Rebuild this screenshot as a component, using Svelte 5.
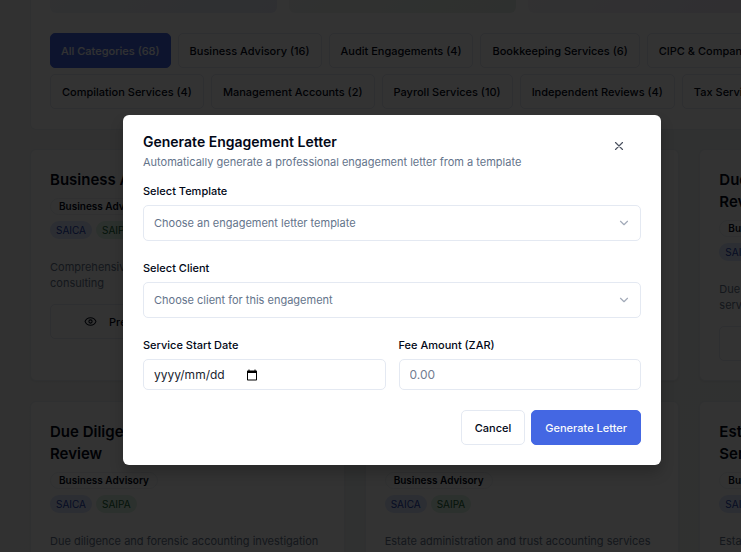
<script>
  const categories = [
    [
      ['All Categories', 68],
      ['Business Advisory', 16],
      ['Audit Engagements', 4],
      ['Bookkeeping Services', 6],
      ['CIPC & Company Law', 8]
    ],
    [
      ['Compilation Services', 4],
      ['Management Accounts', 2],
      ['Payroll Services', 10],
      ['Independent Reviews', 4],
      ['Tax Services', 14]
    ]
  ];

  const templates = [
    { title: 'Business Advisory', text: 'Comprehensive business advisory and strategic consulting' },
    { title: '', text: '' },
    { title: 'Due Diligence Services Review', text: 'Due diligence and forensic accounting investigation services' },
    { title: 'Due Diligence & Forensic Review', text: 'Due diligence and forensic accounting investigation' },
    { title: 'Estate Administration & Trust Services', text: 'Estate administration and trust accounting services' },
    { title: 'Estate Administration Services', text: 'Estate planning and advisory services' }
  ];

  let active = $state('All Categories');
  let template = $state('');
  let client = $state('');
  let startDate = $state('');
  let fee = $state(null);
</script>

{#snippet chevron()}
  <svg class="chevron" viewBox="0 0 24 24" aria-hidden="true"><path d="m6 9 6 6 6-6" /></svg>
{/snippet}

<div class="page">
  <main>
    <section class="filters">
      <div class="stats">
        <div class="stat blue"></div>
        <div class="stat green"></div>
        <div class="stat purple"></div>
        <div class="stat blue"></div>
      </div>
      {#each categories as row}
        <div class="chips">
          {#each row as [name, count]}
            <button type="button" class="btn" class:primary={active === name} onclick={() => (active = name)}>{name} ({count})</button>
          {/each}
        </div>
      {/each}
    </section>

    <section class="cards">
      {#each templates as item}
        <article class="card">
          {#if item.title}
            <h3>{item.title}</h3>
            <span class="badge">Business Advisory</span>
            <div class="bodies">
              <span class="body saica">SAICA</span>
              <span class="body saipa">SAIPA</span>
            </div>
            <p>{item.text}</p>
            <button type="button" class="btn preview">
              <svg viewBox="0 0 24 24" aria-hidden="true">
                <path d="M2.1 12.3a1 1 0 0 1 0-.7 10.75 10.75 0 0 1 19.8 0 1 1 0 0 1 0 .7 10.75 10.75 0 0 1-19.8 0" />
                <circle cx="12" cy="12" r="3" />
              </svg>
              Preview
            </button>
          {/if}
        </article>
      {/each}
    </section>
  </main>

  <div class="overlay">
    <div class="dialog" role="dialog" aria-modal="true" aria-labelledby="dialog-title">
      <header>
        <div>
          <h2 id="dialog-title">Generate Engagement Letter</h2>
          <p>Automatically generate a professional engagement letter from a template</p>
        </div>
        <button type="button" class="close" aria-label="Close">
          <svg viewBox="0 0 24 24" aria-hidden="true"><path d="M18 6 6 18M6 6l12 12" /></svg>
        </button>
      </header>

      <form>
        <div class="field">
          <label for="template">Select Template</label>
          <div class="select">
            <select id="template" bind:value={template}>
              <option value="">Choose an engagement letter template</option>
            </select>
            {@render chevron()}
          </div>
        </div>
        <div class="field">
          <label for="client">Select Client</label>
          <div class="select">
            <select id="client" bind:value={client}>
              <option value="">Choose client for this engagement</option>
            </select>
            {@render chevron()}
          </div>
        </div>
        <div class="pair">
          <div class="field">
            <label for="start">Service Start Date</label>
            <div class="control date">
              <input id="start" type="text" placeholder="yyyy/mm/dd" bind:value={startDate} />
              <button type="button" class="picker" aria-label="Show date picker">
                <svg viewBox="0 0 24 24" aria-hidden="true">
                  <path d="M20 3h-1V1h-2v2H7V1H5v2H4c-1.100 0-2 .9-2 2v16c0 1.100.9 2 2 2h16c1.100 0 2-.9 2-2V5c0-1.100-.9-2-2-2zm0 18H4V8h16v13z" />
                </svg>
              </button>
            </div>
          </div>
          <div class="field">
            <label for="fee">Fee Amount (ZAR)</label>
            <input class="control" id="fee" type="number" placeholder="0.00" bind:value={fee} />
          </div>
        </div>
        <footer>
          <button type="button" class="btn">Cancel</button>
          <button type="button" class="btn primary">Generate Letter</button>
        </footer>
      </form>
    </div>
  </div>
</div>

<style>
  :global(body) {
    margin: 0;
  }

  .page,
  .page :global(*) {
    box-sizing: border-box;
  }

  .page {
    position: relative;
    height: 100vh;
    overflow: hidden;
    background: linear-gradient(135deg, #f5f6f6, #eef2f1);
    color: #020817;
    font-family: Inter, 'Liberation Sans', sans-serif;
    font-size: 11px;
    line-height: 16px;
  }

  h2,
  h3,
  p {
    margin: 0;
  }

  button,
  input,
  select {
    font: inherit;
    color: inherit;
  }

  main {
    min-width: 1044px;
    padding: 0 30px;
  }

  .filters {
    height: 130px;
    padding: 0 19px;
    border: 1px solid #e8edf3;
    border-top: 0;
    border-radius: 0 0 6px 6px;
    background: #fff;
  }

  .stats {
    display: grid;
    grid-template-columns: repeat(4, 1fr);
    gap: 12px;
    margin-bottom: 20px;
  }

  .stat {
    height: 13px;
    border-radius: 0 0 6px 6px;
  }

  .blue {
    background: linear-gradient(135deg, #f2f5fb, #e8ecf9);
  }

  .green {
    background: linear-gradient(135deg, #f2f6f3, #e6f0e8);
  }

  .purple {
    background: linear-gradient(135deg, #f7f6fb, #ede8f5);
  }

  .chips {
    display: flex;
    gap: 7px;
    margin-bottom: 6px;
  }

  .btn {
    display: inline-flex;
    align-items: center;
    justify-content: center;
    height: 35px;
    padding: 0 11px;
    border: 1px solid #e4e9f2;
    border-radius: 5px;
    background: #fff;
    font-weight: 500;
    white-space: nowrap;
  }

  .btn.primary {
    border-color: #4467e3;
    background: #4467e3;
    color: #f8fafc;
  }

  .chips .primary {
    padding: 0 10px;
  }

  .cards {
    display: grid;
    grid-template-columns: repeat(3, 1fr);
    gap: 20px;
    padding-top: 19px;
  }

  .card {
    display: flex;
    flex-direction: column;
    align-items: flex-start;
    padding: 19px;
    border: 1px solid #e8edf3;
    border-radius: 6px;
    background: #fff;
    box-shadow: 0 1px 2px #0000000d;
  }

  h3 {
    width: 180px;
    font-size: 15px;
    font-weight: 600;
    line-height: 22px;
  }

  .badge {
    margin-top: 7px;
    padding: 0 8px;
    border: 1px solid #eef1f5;
    border-radius: 9px;
    font-size: 10px;
    font-weight: 600;
    line-height: 15px;
  }

  .bodies {
    display: flex;
    gap: 4px;
    margin: 6px 0 20px;
  }

  .body {
    padding: 0 6px;
    border-radius: 9px;
    font-size: 10px;
    line-height: 18px;
  }

  .saica {
    background: #dbe4fe;
    color: #1d40af;
  }

  .saipa {
    background: #dcf2e3;
    color: #166534;
  }

  .card p {
    min-height: 32px;
    color: #64748b;
  }

  .preview {
    width: 135px;
    gap: 12px;
    margin-top: 13px;
  }

  svg {
    fill: none;
    stroke: currentColor;
    stroke-width: 2;
    stroke-linecap: round;
    stroke-linejoin: round;
  }

  .preview svg {
    width: 13px;
    height: 13px;
  }

  .overlay {
    position: absolute;
    inset: 0;
    display: flex;
    align-items: center;
    justify-content: center;
    padding: 28px 0 0 43px;
    background: #000c;
  }

  .dialog {
    width: 100%;
    max-width: 538px;
    padding: 20px;
    border-radius: 6px;
    background: #fff;
    box-shadow: 0 8px 14px #0003;
  }

  header {
    display: flex;
    align-items: flex-start;
    justify-content: space-between;
    margin-bottom: 14px;
  }

  h2 {
    margin-bottom: 5px;
    font-size: 14px;
    font-weight: 600;
    line-height: 14px;
  }

  header p {
    color: #64748b;
  }

  .close {
    display: flex;
    padding: 4px 15px;
    border: 0;
    background: none;
    color: #4b5260;
  }

  .close svg {
    width: 14px;
    height: 14px;
  }

  form,
  footer,
  .field,
  .pair {
    display: flex;
  }

  form {
    flex-direction: column;
    gap: 20px;
  }

  .field {
    flex: 1;
    flex-direction: column;
    gap: 7px;
    min-width: 0;
  }

  .pair {
    gap: 13px;
  }

  label {
    font-weight: 500;
    line-height: 14px;
  }

  .select {
    position: relative;
  }

  select {
    display: block;
    width: 100%;
    height: 36px;
    padding: 0 10px;
    border: 1px solid #e4e9f2;
    border-radius: 5px;
    appearance: none;
    background: #fff;
    color: #64748b;
  }

  .chevron {
    position: absolute;
    top: 11px;
    right: 10px;
    width: 14px;
    height: 14px;
    color: #a3abb9;
    pointer-events: none;
  }

  .control {
    width: 100%;
    height: 31px;
    padding: 0 10px;
    border: 1px solid #e4e9f2;
    border-radius: 5px;
    background: #fff;
    font-size: 12px;
  }

  input::placeholder {
    color: #737d90;
    opacity: 1;
  }

  .date {
    display: flex;
    align-items: center;
  }

  .date input {
    width: 92px;
    padding: 0;
    border: 0;
    outline: 0;
    background: none;
  }

  .date input::placeholder {
    color: #20242f;
  }

  .picker {
    display: flex;
    padding: 0;
    border: 0;
    background: none;
  }

  .picker svg {
    width: 12px;
    height: 12px;
    fill: #000;
    stroke: none;
  }

  footer {
    justify-content: flex-end;
    gap: 6px;
  }

  footer .btn {
    padding: 0 13px;
  }
</style>
